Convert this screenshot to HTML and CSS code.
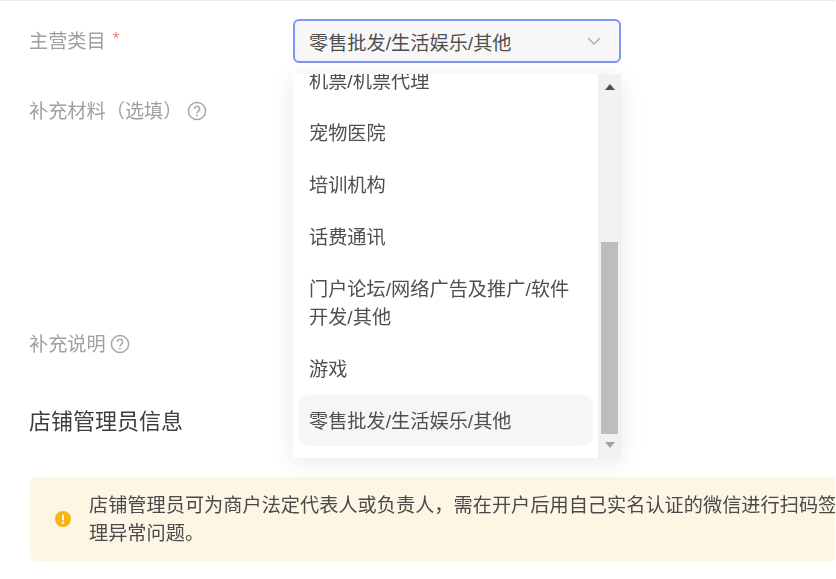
FILE: index.html
```html
<!DOCTYPE html>
<html lang="zh-CN">
<head>
<meta charset="utf-8">
<title>店铺管理员信息</title>
<link rel="stylesheet" href="styles.css">
</head>
<body>
<main class="page">
  <div class="row row-category">
    <div class="label"><span class="label-text">主营类目</span><span class="star">*</span></div>
    <div class="select-wrap">
      <div class="select">
        <span class="select-text">零售批发/生活娱乐/其他</span>
        <svg class="chevron" width="16" height="10" viewBox="0 0 16 10"><path d="M2 2l6 6 6-6" fill="none" stroke="#b0b0b0" stroke-width="1.5"/></svg>
      </div>
      <div class="menu">
        <ul class="options">
          <li>机票/机票代理</li>
          <li>宠物医院</li>
          <li>培训机构</li>
          <li>话费通讯</li>
          <li>门户论坛/网络广告及推广/软件开发/其他</li>
          <li>游戏</li>
          <li class="selected">零售批发/生活娱乐/其他</li>
        </ul>
        <div class="scrollbar">
          <svg class="arrow arrow-up" width="10" height="6" viewBox="0 0 10 6"><path d="M5 0l5 6H0z" fill="#505050"/></svg>
          <div class="track"><div class="thumb"></div></div>
          <svg class="arrow arrow-down" width="10" height="6" viewBox="0 0 10 6"><path d="M5 6L0 0h10z" fill="#a3a3a3"/></svg>
        </div>
      </div>
    </div>
  </div>
  <div class="row row-material">
    <div class="label"><span class="label-text">补充材料（选填）</span><svg class="help" width="20" height="20" viewBox="0 0 20 20"><circle cx="10" cy="10" r="8.6" fill="none" stroke="#a8a8a8" stroke-width="1.5"/><path d="M7.4 7.9a2.6 2.6 0 1 1 4.2 2c-1 .8-1.6 1.2-1.6 2.4" fill="none" stroke="#a8a8a8" stroke-width="1.5"/><circle cx="10" cy="14.6" r="1" fill="#a8a8a8"/></svg></div>
  </div>
  <div class="row row-note">
    <div class="label"><span class="label-text">补充说明</span><svg class="help" width="20" height="20" viewBox="0 0 20 20"><circle cx="10" cy="10" r="8.6" fill="none" stroke="#a8a8a8" stroke-width="1.5"/><path d="M7.4 7.9a2.6 2.6 0 1 1 4.2 2c-1 .8-1.6 1.2-1.6 2.4" fill="none" stroke="#a8a8a8" stroke-width="1.5"/><circle cx="10" cy="14.6" r="1" fill="#a8a8a8"/></svg></div>
  </div>
  <h2 class="heading">店铺管理员信息</h2>
  <div class="alert">
    <svg class="alert-icon" width="18" height="18" viewBox="0 0 18 18"><circle cx="9" cy="9" r="8" fill="#fbb30f"/><rect x="8" y="4.4" width="2" height="6" rx="1" fill="#fff"/><circle cx="9" cy="12.7" r="1.1" fill="#fff"/></svg>
    <p class="alert-text">店铺管理员可为商户法定代表人或负责人，需在开户后用自己实名认证的微信进行扫码签<br>理异常问题。</p>
  </div>
</main>
</body>
</html>
```
FILE: styles.css
```css
html, body {
  margin: 0;
  padding: 0;
  background: #fff;
}
body {
  width: 836px;
  height: 579px;
  overflow: hidden;
  font-family: "Liberation Sans", "Noto Sans CJK SC", sans-serif;
  font-size: 19.2px;
  color: #4f4f4f;
}
.page {
  box-sizing: border-box;
  width: 835px;
  height: 579px;
  border-top: 1px solid #ececec;
  padding: 18px 0 0 29px;
  overflow: hidden;
  filter: blur(0.5px);
}
.row {
  display: flex;
  align-items: flex-start;
}
.row-category {
  height: 70px;
}
.row-material {
  height: 233px;
}
.row-note {
  height: 81px;
}
.label {
  display: flex;
  align-items: center;
  gap: 4px;
  width: 264px;
  height: 44px;
  color: #a0a0a0;
  line-height: 44px;
  white-space: nowrap;
}
.label-text {
  padding-top: 2px;
}
.star {
  align-self: flex-start;
  margin: -2px 0 0 3px;
  color: #f7787f;
  font-size: 17px;
}
.select-wrap {
  position: relative;
  width: 328px;
}
.select {
  box-sizing: border-box;
  display: flex;
  align-items: center;
  justify-content: space-between;
  height: 44px;
  padding: 0 17px 0 14px;
  background: #f7f7f7;
  border: 2px solid #7d96f6;
  border-radius: 6px;
}
.select-text {
  padding-top: 2px;
}
.chevron {
  flex: none;
}
.menu {
  position: absolute;
  z-index: 2;
  top: 55px;
  left: 0;
  display: flex;
  width: 328px;
  height: 384px;
  background: #fff;
  box-shadow: 0 4px 24px rgba(0, 0, 0, 0.09);
  overflow: hidden;
}
.options {
  flex: 1;
  margin: -19px 0 0;
  padding: 0 5px;
  list-style: none;
  line-height: 28px;
}
.options li {
  padding: 13px 11px 11px;
}
.options .selected {
  padding-bottom: 10px;
  background: #f6f6f6;
  border-radius: 12px;
}
.scrollbar {
  display: flex;
  flex-direction: column;
  align-items: center;
  width: 23px;
  background: #f1f1f1;
}
.arrow {
  flex: none;
}
.arrow-up {
  margin: 10px 0;
}
.arrow-down {
  margin: 8px 0 10px;
}
.track {
  flex: 1;
  display: flex;
  flex-direction: column;
  justify-content: flex-end;
  align-self: stretch;
  padding: 0 3px;
}
.thumb {
  height: 192px;
  background: #bdbdbd;
}
.heading {
  margin: 0 0 38px;
  padding-top: 2px;
  font-size: 22px;
  font-weight: 400;
  line-height: 34px;
  color: #3d3d3d;
}
.alert {
  display: flex;
  align-items: center;
  width: 860px;
  height: 84px;
  margin-left: 1px;
  background: #fef6e5;
  border-radius: 6px;
}
.alert-icon {
  flex: none;
  margin: 0 17px 0 24px;
}
.alert-text {
  margin: 0;
  padding-top: 2px;
  line-height: 28px;
  white-space: nowrap;
  color: #4a4a4a;
}
```
